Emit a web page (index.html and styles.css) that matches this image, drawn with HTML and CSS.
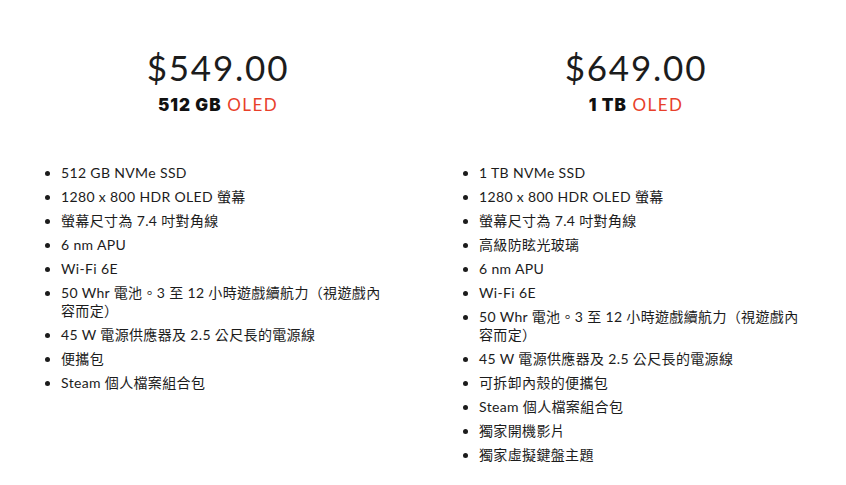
FILE: index.html
```html
<!DOCTYPE html>
<html lang="zh-Hant">
<head>
<meta charset="utf-8">
<link rel="stylesheet" href="styles.css">
</head>
<body>
<div class="plans">
  <section class="plan">
    <div class="price">$549.00</div>
    <div class="model"><b>512 GB</b> <span class="oled">OLED</span></div>
    <ul class="specs">
      <li>512 GB NVMe SSD</li>
      <li>1280 x 800 HDR OLED 螢幕</li>
      <li>螢幕尺寸為 7.4 吋對角線</li>
      <li>6 nm APU</li>
      <li>Wi-Fi 6E</li>
      <li>50 Whr 電池。3 至 12 小時遊戲續航力（視遊戲內容而定）</li>
      <li>45 W 電源供應器及 2.5 公尺長的電源線</li>
      <li>便攜包</li>
      <li>Steam 個人檔案組合包</li>
    </ul>
  </section>
  <section class="plan">
    <div class="price">$649.00</div>
    <div class="model"><b>1 TB</b> <span class="oled">OLED</span></div>
    <ul class="specs">
      <li>1 TB NVMe SSD</li>
      <li>1280 x 800 HDR OLED 螢幕</li>
      <li>螢幕尺寸為 7.4 吋對角線</li>
      <li>高級防眩光玻璃</li>
      <li>6 nm APU</li>
      <li>Wi-Fi 6E</li>
      <li>50 Whr 電池。3 至 12 小時遊戲續航力（視遊戲內容而定）</li>
      <li>45 W 電源供應器及 2.5 公尺長的電源線</li>
      <li>可拆卸內殼的便攜包</li>
      <li>Steam 個人檔案組合包</li>
      <li>獨家開機影片</li>
      <li>獨家虛擬鍵盤主題</li>
    </ul>
  </section>
</div>
</body>
</html>
```
FILE: styles.css
```css
html, body {
  margin: 0;
  padding: 0;
  background: #ffffff;
}
body {
  font-family: Lato, "Noto Sans CJK TC", sans-serif;
  color: #1c1c1c;
}
.plans {
  display: grid;
  grid-template-columns: 376px 376px;
  column-gap: 42px;
  padding: 46px 0 0 30px;
}
.plan {
  display: flex;
  flex-direction: column;
}
.price {
  text-align: center;
  font-size: 35px;
  line-height: 42px;
  letter-spacing: 1.8px;
  color: #1c1c1c;
}
.model {
  text-align: center;
  margin-top: 7px;
  font-size: 17px;
  line-height: 20px;
  letter-spacing: 1.4px;
}
.model b {
  font-family: Inter, Lato, sans-serif;
  font-size: 17px;
  font-weight: 900;
  letter-spacing: 1px;
  color: #111;
}
.oled {
  color: #e8402a;
}
.specs {
  margin: 49px 0 0 0;
  padding: 0 20px 0 31px;
  list-style: disc;
  font-size: 14px;
  line-height: 18px;
  letter-spacing: 0.35px;
}
.specs li {
  margin-bottom: 6px;
}
```
